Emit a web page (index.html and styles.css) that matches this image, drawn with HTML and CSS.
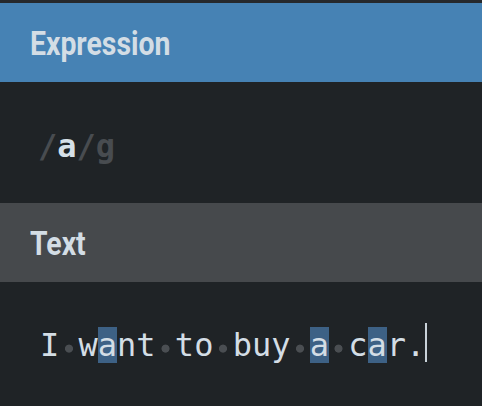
FILE: index.html
```html
<!DOCTYPE html>
<html>
<head>
<meta charset="utf-8">
<link rel="stylesheet" href="styles.css">
</head>
<body>
<div class="topbar"></div>
<section class="panel">
  <div class="header header-expr"><span class="title">Expression</span></div>
  <div class="body body-expr">
    <span class="regex"><span class="delim">/</span><span class="pattern">a</span><span class="delim">/</span><span class="flags">g</span></span>
  </div>
</section>
<section class="panel">
  <div class="header header-text"><span class="title">Text</span></div>
  <div class="body body-text">
    <span class="code">I<span class="sp"> </span>w<span class="match">a</span>nt<span class="sp"> </span>to<span class="sp"> </span>buy<span class="sp"> </span><span class="match">a</span><span class="sp"> </span>c<span class="match">a</span>r.<span class="cursor"></span></span>
  </div>
</section>
</body>
</html>
```
FILE: styles.css
```css
html, body {
  margin: 0;
  padding: 0;
}
body {
  background: #1f2326;
  width: 482px;
  height: 406px;
  overflow: hidden;
}
.topbar {
  height: 3px;
  background: #26292c;
}
.header {
  height: 79px;
  display: flex;
  align-items: center;
  padding-left: 30px;
}
.header-expr {
  background: #4682b4;
}
.header-text {
  background: #46494c;
}
.title {
  display: inline-block;
  font-family: Roboto, "Liberation Sans", sans-serif;
  font-weight: 700;
  font-size: 33px;
  color: #d3dde5;
  transform: scaleX(0.86);
  transform-origin: left center;
  line-height: 1;
  padding-top: 2px;
}
.body-expr {
  height: 121px;
  display: flex;
  align-items: center;
  padding-left: 38px;
}
.regex {
  font-family: "DejaVu Sans Mono", "Liberation Mono", monospace;
  font-weight: 700;
  font-size: 32px;
  line-height: 1;
  padding-top: 6px;
}
.delim, .flags {
  color: #484c50;
}
.pattern {
  color: #d6e0e8;
}
.body-text {
  height: 124px;
  display: flex;
  align-items: center;
  padding-left: 40px;
}
.code {
  font-family: "DejaVu Sans Mono", "Liberation Mono", monospace;
  font-size: 32px;
  line-height: 36px;
  color: #d3dde5;
  white-space: pre;
  display: inline-flex;
  align-items: stretch;
  margin-top: 2px;
}
.match {
  background: #3d6185;
}
.sp {
  background: radial-gradient(circle at 50% 60%, #4a4e52 0, #4a4e52 3.6px, transparent 4.4px);
}
.cursor {
  display: inline-block;
  width: 2px;
  height: 39px;
  background: #c9d2d9;
  margin-top: -4px;
}
```
